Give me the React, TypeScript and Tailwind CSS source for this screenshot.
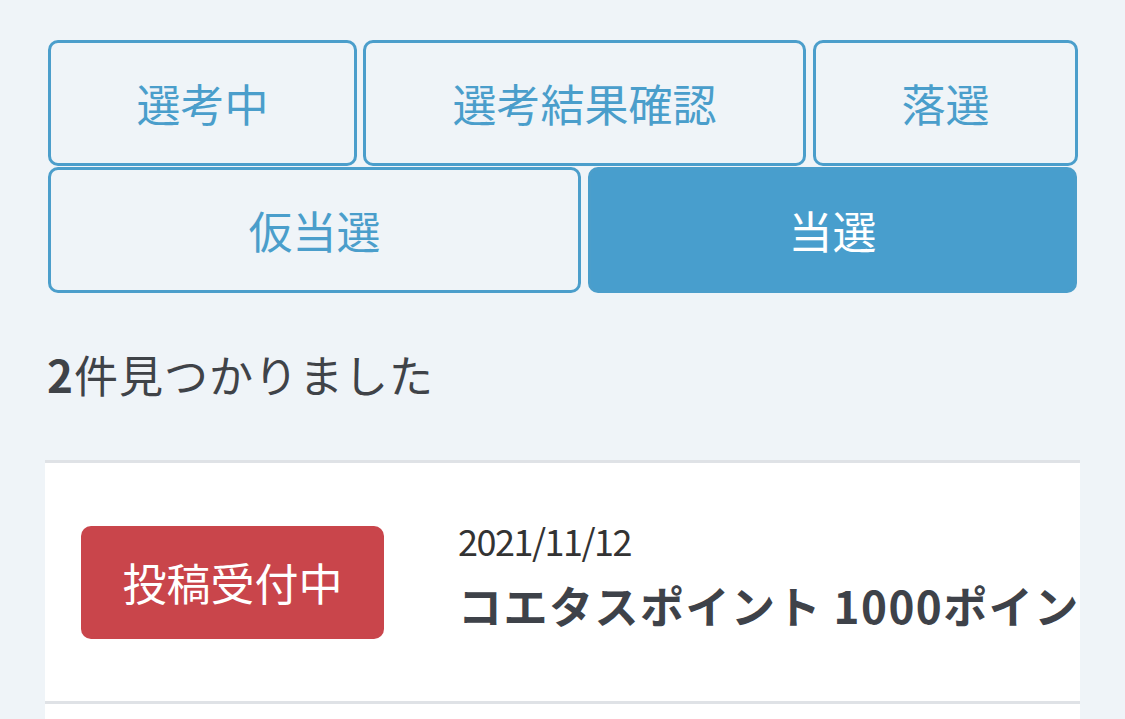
import React from "react";

const font = { fontFamily: '"Noto Sans CJK JP", "Noto Sans", sans-serif' };

function TabButton({ label, active, w }: { label: string; active?: boolean; w: string }) {
  return (
    <div
      className={`${w} h-[126px] shrink-0 rounded-[10px] border-[3px] border-[#4b9ecb] flex items-center justify-center text-[44px] leading-none ${
        active ? "bg-[#489ecd] text-white" : "bg-[#eff4f8] text-[#4a9ecb]"
      }`}
    >
      {label}
    </div>
  );
}

export default function App() {
  return (
    <div className="w-[1125px] h-[719px] overflow-hidden bg-[#eff4f8]" style={font}>
      <div className="pt-[40px] px-[48px] flex flex-col gap-px">
        <div className="flex gap-[6px]">
          <TabButton label="選考中" w="w-[309px]" />
          <TabButton label="選考結果確認" w="w-[443px]" />
          <TabButton label="落選" w="w-[265px] ml-[1px]" />
        </div>
        <div className="flex gap-[7px]">
          <TabButton label="仮当選" w="w-[533px]" />
          <TabButton label="当選" active w="w-[489px]" />
        </div>
      </div>
      <div className="px-[47px] pt-[59px] h-[167px] text-[44px] leading-none text-[#3f4348] tracking-[1px]">
        <span className="font-bold">2</span>件見つかりました
      </div>
      <div className="mx-[45px] bg-white border-t-[3px] border-b-[3px] border-[#dfe2e6] h-[244px] flex items-center pl-[36px] overflow-hidden">
        <div className="w-[303px] h-[113px] shrink-0 rounded-[10px] bg-[#c9454b] text-white text-[44px] flex items-center justify-center leading-none">
          投稿受付中
        </div>
        <div className="ml-[74px] mb-[16px] flex flex-col whitespace-nowrap">
          <div className="text-[36px] leading-none text-[#333] tracking-[-1.5px]">2021/11/12</div>
          <div className="mt-[25px] text-[44px] leading-none font-bold text-[#3e4249] tracking-[1.5px]">
            コエタスポイント 1000ポイント
          </div>
        </div>
      </div>
      <div className="mx-[45px] bg-white h-[40px]" />
    </div>
  );
}
